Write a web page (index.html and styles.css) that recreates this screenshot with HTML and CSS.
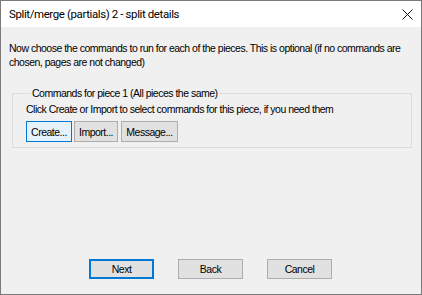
FILE: index.html
```html
<!DOCTYPE html>
<html lang="en">
<head>
  <meta charset="UTF-8">
  <title>Split/merge (partials) 2 - split details</title>
  <link rel="stylesheet" href="styles.css">
</head>
<body>
  <div class="window">
    <header class="titlebar">
      <span class="title">Split/merge (partials) 2 - split details</span>
      <svg class="close" width="11" height="11" viewBox="0 0 11 11">
        <path d="M0.5 0.5 L10.5 10.5 M10.5 0.5 L0.5 10.5" stroke="#111" stroke-width="1" fill="none"></path>
      </svg>
    </header>

    <main class="content">
      <p class="intro">Now choose the commands to run for each of the pieces. This is optional (if no commands are chosen, pages are not changed)</p>

      <fieldset class="group">
        <legend>Commands for piece 1 (All pieces the same)</legend>
        <p class="hint">Click Create or Import to select commands for this piece, if you need them</p>
        <div class="tools">
          <button class="btn btn-create focused">Create...</button>
          <button class="btn btn-import">Import...</button>
          <button class="btn btn-message">Message...</button>
        </div>
      </fieldset>

      <div class="actions">
        <button class="btn btn-wide default">Next</button>
        <button class="btn btn-wide">Back</button>
        <button class="btn btn-wide">Cancel</button>
      </div>
    </main>
  </div>
</body>
</html>
```

FILE: styles.css
```css
* {
  margin: 0;
  padding: 0;
  box-sizing: border-box;
}

body {
  width: 422px;
  height: 295px;
  overflow: hidden;
  font-family: "Liberation Sans", Arial, sans-serif;
  font-size: 10.5px;
  letter-spacing: -0.5px;
  color: #000;
}

.window {
  width: 422px;
  height: 295px;
  border: 1px solid #7a7a7a;
  background: #f0f0f0;
  display: flex;
  flex-direction: column;
}

.titlebar {
  height: 26px;
  background: #fff;
  display: flex;
  align-items: center;
  justify-content: space-between;
  padding: 0 8px 0 8px;
}

.title {
  font-family: Roboto, "Noto Sans", sans-serif;
  font-size: 11.5px;
  letter-spacing: -0.4px;
  color: #000;
}

.close {
  display: block;
}

.content {
  flex: 1;
  display: flex;
  flex-direction: column;
  padding: 14px 9px 15px 8px;
}

.intro {
  line-height: 14px;
}

.group {
  margin: 18px 0 0 3px;
  border: 1px solid #dcdcdc;
  padding: 3px 12px 5px 13px;
}

.group legend {
  padding: 0 1px;
  margin-left: 5px;
  line-height: 12px;
}

.hint {
  line-height: 14px;
}

.tools {
  display: flex;
  gap: 2px;
  margin-top: 5px;
}

.btn {
  font-family: "Liberation Sans", Arial, sans-serif;
  font-size: 10.5px;
  letter-spacing: -0.5px;
  color: #000;
  background: #e1e1e1;
  border: 1px solid #adadad;
  height: 21px;
  padding: 0;
}

.btn-create { width: 46px; }
.btn-import { width: 44px; }
.btn-message { width: 57px; margin-left: 1px; }

.btn.focused {
  background: #e5f1fb;
  border-color: #0078d7;
}

.actions {
  margin-top: auto;
  display: flex;
  gap: 24px;
  padding-left: 80px;
}

.btn-wide {
  width: 65px;
  height: 20px;
}

.btn.default {
  border: 2px solid #0078d7;
}
```
